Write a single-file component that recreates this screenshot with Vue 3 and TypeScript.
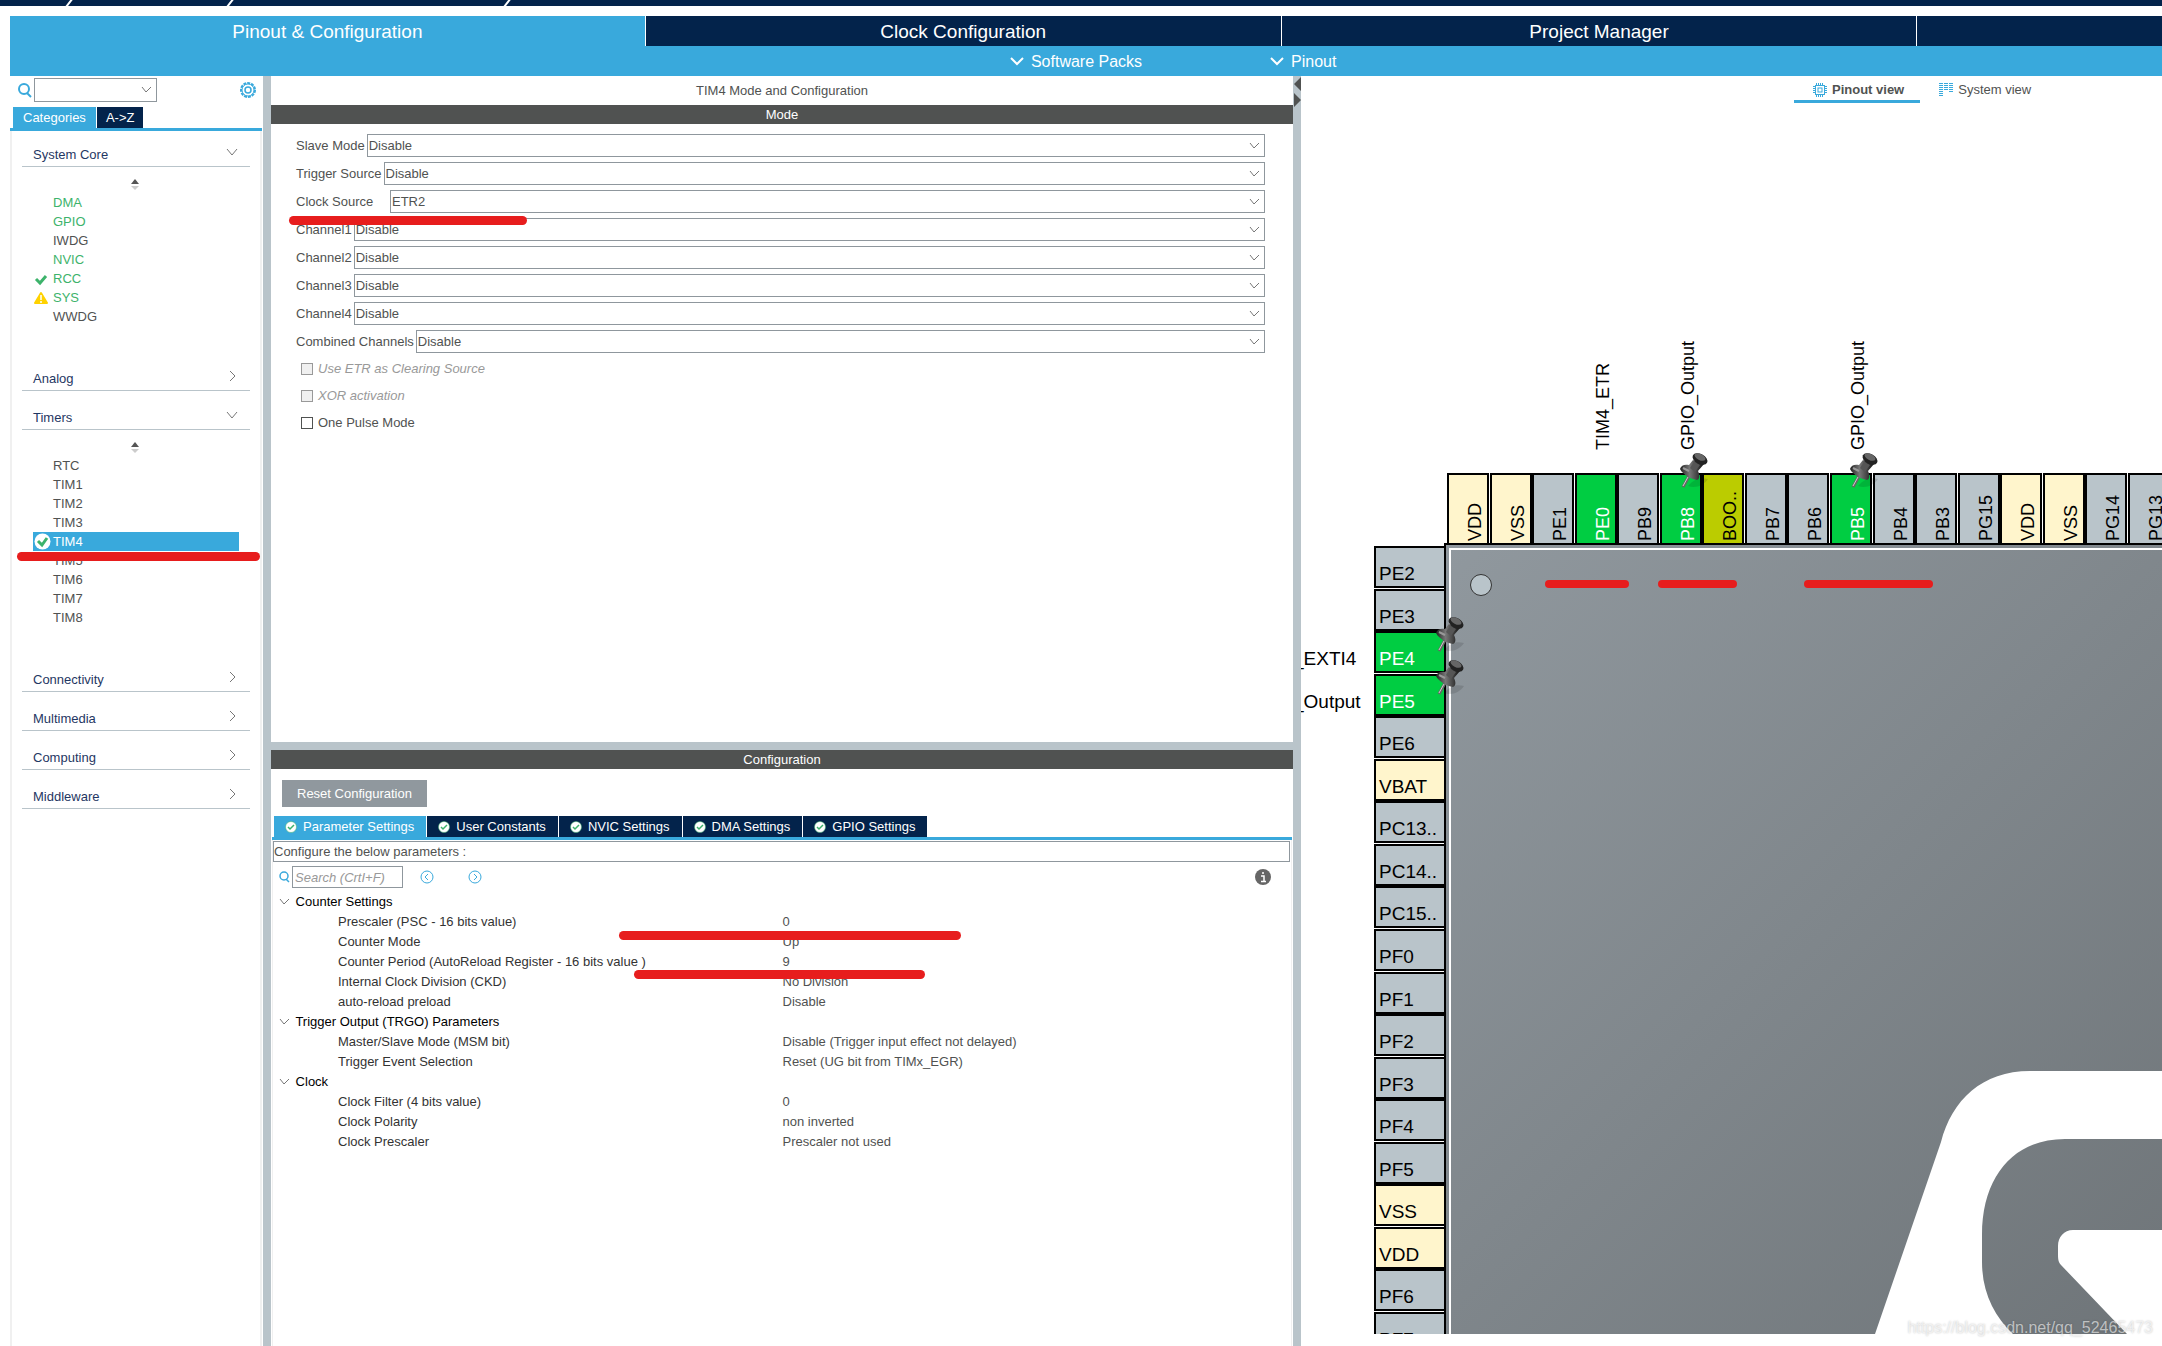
<script setup lang="ts">
import { ref } from 'vue'

interface Item {
  name: string
  state?: 'used' | 'ready' | 'warn' | 'active'
}
interface Category {
  name: string
  items?: Item[]
}
interface ModeField {
  id: string
  label: string
  value: string
  wide?: boolean
}
interface ParamGroup {
  name: string
  rows: [string, string][]
}
interface Pin {
  name: string
  kind: 'io' | 'power' | 'on' | 'boot'
  label?: string
  pinned?: boolean
}

const mainTabs = ['Pinout & Configuration', 'Clock Configuration', 'Project Manager', '']

const categories: Category[] = [
  {
    name: 'System Core',
    items: [
      { name: 'DMA', state: 'used' },
      { name: 'GPIO', state: 'used' },
      { name: 'IWDG' },
      { name: 'NVIC', state: 'used' },
      { name: 'RCC', state: 'ready' },
      { name: 'SYS', state: 'warn' },
      { name: 'WWDG' },
    ],
  },
  { name: 'Analog' },
  {
    name: 'Timers',
    items: [
      { name: 'RTC' },
      { name: 'TIM1' },
      { name: 'TIM2' },
      { name: 'TIM3' },
      { name: 'TIM4', state: 'active' },
      { name: 'TIM5' },
      { name: 'TIM6' },
      { name: 'TIM7' },
      { name: 'TIM8' },
    ],
  },
  { name: 'Connectivity' },
  { name: 'Multimedia' },
  { name: 'Computing' },
  { name: 'Middleware' },
]

const fields = ref<ModeField[]>([
  { id: 'slave', label: 'Slave Mode', value: 'Disable' },
  { id: 'trigger', label: 'Trigger Source', value: 'Disable' },
  { id: 'clock', label: 'Clock Source', value: 'ETR2', wide: true },
  { id: 'ch1', label: 'Channel1', value: 'Disable' },
  { id: 'ch2', label: 'Channel2', value: 'Disable' },
  { id: 'ch3', label: 'Channel3', value: 'Disable' },
  { id: 'ch4', label: 'Channel4', value: 'Disable' },
  { id: 'combined', label: 'Combined Channels', value: 'Disable' },
])

const checks = [
  { id: 'etr', label: 'Use ETR as Clearing Source', disabled: true },
  { id: 'xor', label: 'XOR activation', disabled: true },
  { id: 'pulse', label: 'One Pulse Mode', disabled: false },
]

const configTabs = ['Parameter Settings', 'User Constants', 'NVIC Settings', 'DMA Settings', 'GPIO Settings']

const groups: ParamGroup[] = [
  {
    name: 'Counter Settings',
    rows: [
      ['Prescaler (PSC - 16 bits value)', '0'],
      ['Counter Mode', 'Up'],
      ['Counter Period (AutoReload Register - 16 bits value )', '9'],
      ['Internal Clock Division (CKD)', 'No Division'],
      ['auto-reload preload', 'Disable'],
    ],
  },
  {
    name: 'Trigger Output (TRGO) Parameters',
    rows: [
      ['Master/Slave Mode (MSM bit)', 'Disable (Trigger input effect not delayed)'],
      ['Trigger Event Selection', 'Reset (UG bit from TIMx_EGR)'],
    ],
  },
  {
    name: 'Clock',
    rows: [
      ['Clock Filter (4 bits value)', '0'],
      ['Clock Polarity', 'non inverted'],
      ['Clock Prescaler', 'Prescaler not used'],
    ],
  },
]

const topPins: Pin[] = [
  { name: 'VDD', kind: 'power' },
  { name: 'VSS', kind: 'power' },
  { name: 'PE1', kind: 'io' },
  { name: 'PE0', kind: 'on', label: 'TIM4_ETR' },
  { name: 'PB9', kind: 'io' },
  { name: 'PB8', kind: 'on', label: 'GPIO_Output', pinned: true },
  { name: 'BOO..', kind: 'boot' },
  { name: 'PB7', kind: 'io' },
  { name: 'PB6', kind: 'io' },
  { name: 'PB5', kind: 'on', label: 'GPIO_Output', pinned: true },
  { name: 'PB4', kind: 'io' },
  { name: 'PB3', kind: 'io' },
  { name: 'PG15', kind: 'io' },
  { name: 'VDD', kind: 'power' },
  { name: 'VSS', kind: 'power' },
  { name: 'PG14', kind: 'io' },
  { name: 'PG13', kind: 'io' },
]

const leftPins: Pin[] = [
  { name: 'PE2', kind: 'io' },
  { name: 'PE3', kind: 'io' },
  { name: 'PE4', kind: 'on', label: '_EXTI4', pinned: true },
  { name: 'PE5', kind: 'on', label: '_Output', pinned: true },
  { name: 'PE6', kind: 'io' },
  { name: 'VBAT', kind: 'power' },
  { name: 'PC13..', kind: 'io' },
  { name: 'PC14..', kind: 'io' },
  { name: 'PC15..', kind: 'io' },
  { name: 'PF0', kind: 'io' },
  { name: 'PF1', kind: 'io' },
  { name: 'PF2', kind: 'io' },
  { name: 'PF3', kind: 'io' },
  { name: 'PF4', kind: 'io' },
  { name: 'PF5', kind: 'io' },
  { name: 'VSS', kind: 'power' },
  { name: 'VDD', kind: 'power' },
  { name: 'PF6', kind: 'io' },
  { name: 'PF7', kind: 'io' },
]

const fills: Record<Pin['kind'], string> = {
  io: '#b9c4ca',
  power: '#fff5cc',
  on: '#00cd42',
  boot: '#bbcc00',
}

/* Pins are spread evenly along each edge of the package and snapped to whole pixels. */
const pinPos = (i: number): number => 3 + Math.round((i * 851) / 20)
</script>

<template>
  <div class="app">
    <div class="crumbs">
      <svg width="600" height="6" aria-hidden="true">
        <path d="M66 7L73 -2M227 7L234 -2M504 7L511 -2" stroke="#fff" stroke-width="2" />
      </svg>
    </div>

    <nav class="main-tabs">
      <button v-for="(t, i) in mainTabs" :key="i" type="button" :class="['main-tab', { on: i === 0 }]">{{ t }}</button>
    </nav>
    <div class="subbar">
      <button type="button" class="sub-btn">
        <svg width="14" height="10" viewBox="0 0 14 10"><path d="M1 2l6 6 6-6" fill="none" stroke="#fff" stroke-width="2" /></svg>
        Software Packs
      </button>
      <button type="button" class="sub-btn">
        <svg width="14" height="10" viewBox="0 0 14 10"><path d="M1 2l6 6 6-6" fill="none" stroke="#fff" stroke-width="2" /></svg>
        Pinout
      </button>
    </div>

    <div class="body">
      <aside class="side">
        <div class="side-tools">
          <svg width="16" height="16" viewBox="0 0 16 16" fill="none" stroke="#39a9dc" stroke-width="2">
            <circle cx="7" cy="7" r="5" /><path d="M10 11l4 4" />
          </svg>
          <span class="pick side-pick">
            <select aria-label="Search peripheral"><option></option></select>
            <svg width="11" height="7" viewBox="0 0 11 7"><path d="M1 1l4 5 5-5" fill="none" stroke="#777" /></svg>
          </span>
          <button type="button" class="gear" aria-label="Settings">
            <svg width="18" height="18" viewBox="0 0 18 18" fill="none" stroke="#39a9dc">
              <circle cx="9" cy="9" r="7" stroke-width="2" stroke-dasharray="3 1" />
              <circle cx="9" cy="9" r="6" /><circle cx="9" cy="9" r="3" stroke-width="1.5" />
            </svg>
          </button>
        </div>
        <div class="side-tabs">
          <button type="button" class="on">Categories</button>
          <button type="button">A-&gt;Z</button>
        </div>
        <div class="side-panel">
          <section v-for="c in categories" :key="c.name" class="cat">
            <button type="button" class="cat-head">
              <span>{{ c.name }}</span>
              <svg v-if="c.items" width="12" height="12" viewBox="0 0 12 12"><path d="M1 3l5 6 5-6" fill="none" stroke="#777" /></svg>
              <svg v-else width="12" height="12" viewBox="0 0 12 12"><path d="M4 1l5 5-5 5" fill="none" stroke="#777" /></svg>
            </button>
            <div v-if="c.items" class="cat-body">
              <svg class="spin" width="8" height="12" viewBox="0 0 8 12">
                <path d="M0 5L4 0l4 5z" fill="#555" /><path d="M0 7h8l-4 4z" fill="#ccc" />
              </svg>
              <ul>
                <li v-for="it in c.items" :key="it.name" :class="it.state">
                  <span class="mark">
                    <svg v-if="it.state === 'ready'" width="14" height="14" viewBox="0 0 14 14"><path d="M2 7l4 4 6-7" fill="none" stroke="#3db36b" stroke-width="3" /></svg>
                    <svg v-else-if="it.state === 'warn'" width="14" height="14" viewBox="0 0 14 14">
                      <path d="M7 2L13 12H1z" fill="#ffd200" stroke="#ffd200" stroke-width="2" stroke-linejoin="round" />
                      <path d="M7 4v5M7 10v2" stroke="#fff" stroke-width="1.5" />
                    </svg>
                    <svg v-else-if="it.state === 'active'" width="17" height="17" viewBox="0 0 17 17">
                      <circle cx="8.5" cy="8.5" r="8" fill="#fff" /><path d="M4 8l4 4 5-7" fill="none" stroke="#3db36b" stroke-width="3" />
                    </svg>
                  </span>
                  {{ it.name }}
                </li>
              </ul>
            </div>
          </section>
          <i class="stroke s-side"></i>
        </div>
      </aside>

      <main class="mid">
        <div class="mid-title">TIM4 Mode and Configuration</div>
        <h2 class="bar">Mode</h2>
        <div class="mode">
          <div v-for="f in fields" :key="f.id" class="field">
            <label :for="f.id" :class="{ wide: f.wide }">{{ f.label }}</label>
            <span class="pick">
              <select :id="f.id" v-model="f.value"><option>{{ f.value }}</option></select>
              <svg width="11" height="7" viewBox="0 0 11 7"><path d="M1 1l4 5 5-5" fill="none" stroke="#777" /></svg>
            </span>
          </div>
          <div v-for="k in checks" :key="k.id" class="check">
            <input :id="k.id" type="checkbox" :disabled="k.disabled" />
            <label :for="k.id">{{ k.label }}</label>
          </div>
          <i class="stroke s-clock"></i>
        </div>
        <h2 class="bar conf-bar">Configuration</h2>
        <div class="conf">
          <button type="button" class="reset">Reset Configuration</button>
          <div class="conf-tabs">
            <button v-for="(t, i) in configTabs" :key="t" type="button" :class="{ on: i === 0 }">
              <svg width="12" height="12" viewBox="0 0 12 12">
                <circle cx="6" cy="6" r="5.5" fill="#fff" stroke="#3db36b" stroke-width="0.5" /><path d="M3 6l2 2 4-4" fill="none" stroke="#3db36b" stroke-width="1.5" />
              </svg>
              {{ t }}
            </button>
          </div>
          <div class="params">
            <div class="hint">Configure the below parameters :</div>
            <div class="find">
              <svg width="11" height="12" viewBox="0 0 11 12" fill="none" stroke="#39a9dc" stroke-width="1.5">
                <circle cx="5" cy="5" r="4" /><path d="M7 8l3 3" />
              </svg>
              <input type="text" placeholder="Search (CrtI+F)" aria-label="Search parameters" />
              <button type="button" class="prev" aria-label="Previous">
                <svg width="14" height="14" viewBox="0 0 14 14" fill="none" stroke="#39a9dc"><circle cx="7" cy="7" r="6" /><path d="M8 4L5 7l3 3" /></svg>
              </button>
              <button type="button" class="next" aria-label="Next">
                <svg width="14" height="14" viewBox="0 0 14 14" fill="none" stroke="#39a9dc"><circle cx="7" cy="7" r="6" /><path d="M6 4l3 3-3 3" /></svg>
              </button>
              <svg class="info" width="16" height="16" viewBox="0 0 16 16">
                <circle cx="8" cy="8" r="8" fill="#666" />
                <path d="M6 7h3v5M6 12.5h5M7 4h2" fill="none" stroke="#fff" stroke-width="1.5" />
              </svg>
            </div>
            <table>
              <tbody v-for="g in groups" :key="g.name">
                <tr>
                  <th colspan="2">
                    <svg width="11" height="7" viewBox="0 0 11 7"><path d="M1 1l4 5 5-5" fill="none" stroke="#777" /></svg>
                    {{ g.name }}
                  </th>
                </tr>
                <tr v-for="r in g.rows" :key="r[0]">
                  <td>{{ r[0] }}</td>
                  <td>{{ r[1] }}</td>
                </tr>
              </tbody>
            </table>
            <i class="stroke s-psc"></i>
            <i class="stroke s-arr"></i>
          </div>
        </div>
      </main>

      <div class="split">
        <svg width="8" height="32" viewBox="0 0 8 32" fill="#505251"><path d="M8 1v14L1 8zM1 17v14l7-7z" /></svg>
      </div>

      <section class="view">
        <div class="view-tabs">
          <button type="button" class="on">
            <svg width="14" height="14" viewBox="0 0 14 14" fill="none" stroke="#39a9dc">
              <rect x="2.5" y="2.5" width="9" height="9" /><rect x="5" y="5" width="4" height="4" />
              <path d="M3.5 0v2M5.5 0v2M7.5 0v2M9.5 0v2M3.5 12v2M5.5 12v2M7.5 12v2M9.5 12v2M0 3.5h2M0 5.5h2M0 7.5h2M0 9.5h2M12 3.5h2M12 5.5h2M12 7.5h2M12 9.5h2" />
            </svg>
            Pinout view
          </button>
          <button type="button">
            <svg width="14" height="14" viewBox="0 0 14 14" fill="none" stroke="#39a9dc" stroke-width="4">
              <path d="M2 0v14" stroke-dasharray="1 1" /><path d="M7 0v8" stroke-dasharray="1 1" /><path d="M12 0v10" stroke-dasharray="1 1" />
            </svg>
            System view
          </button>
        </div>
        <svg class="chip" aria-label="MCU pinout">
          <defs>
            <linearGradient id="pkg" gradientUnits="userSpaceOnUse" x1="0" y1="0" x2="750" y2="750">
              <stop offset="0" stop-color="#90989e" /><stop offset="1" stop-color="#6f7579" />
            </linearGradient>
            <linearGradient id="metal" x1="0" y1="0" x2="1" y2="0">
              <stop offset="0" stop-color="#222" /><stop offset="0.4" stop-color="#777" /><stop offset="1" stop-color="#111" />
            </linearGradient>
            <g id="pushpin">
              <path d="M8 34C14 27 20 25 28 27C24 33 16 37 8 34z" fill="#000" opacity="0.12" />
              <path d="M3 35L9 24" stroke="#666" stroke-width="3" />
              <path d="M3 34L8 25" stroke="#ccc" stroke-width="1" />
              <path d="M0 17C1 13 5 12 9 13L13 8L24 12L18 19C20 23 20 27 17 28C11 27 3 23 0 17z" fill="url(#metal)" />
              <path d="M14 10L20 13L15 20L10 16z" fill="#555" />
              <ellipse cx="20" cy="7" rx="8" ry="5" transform="rotate(28 20 7)" fill="#222" />
              <ellipse cx="20" cy="5" rx="6" ry="3" transform="rotate(28 20 5)" fill="#666" />
              <path d="M3 16L9 19" stroke="#999" stroke-width="2" />
            </g>
          </defs>
          <g transform="translate(143 439)">
            <g v-for="(p, i) in topPins" :key="'t' + i">
              <rect :x="pinPos(i) + 1" y="-69" width="40" height="72" :fill="fills[p.kind]" stroke="#000" stroke-width="2" />
              <text class="vert" :fill="p.kind === 'on' ? '#fff' : '#000'" :transform="`translate(${pinPos(i) + 34} -2) rotate(-90)`">{{ p.name }}</text>
              <text v-if="p.label" class="vert" :transform="`translate(${pinPos(i) + 34} -93) rotate(-90)`">{{ p.label }}</text>
            </g>
            <g v-for="(p, i) in leftPins" :key="'l' + i">
              <rect x="-69" :y="pinPos(i) + 1" width="72" height="40" :fill="fills[p.kind]" stroke="#000" stroke-width="2" />
              <text class="horz" x="-65" :y="pinPos(i) + 34" :fill="p.kind === 'on' ? '#fff' : '#000'">{{ p.name }}</text>
              <text v-if="p.label" class="horz" x="-151" :y="pinPos(i) + 34">{{ p.label }}</text>
            </g>
            <rect width="1600" height="1600" fill="#000" />
            <rect x="2" y="2" width="1600" height="1600" fill="url(#pkg)" />
            <path d="M6 1600V6H1600" fill="none" stroke="#fff" stroke-width="2" />
            <circle cx="37" cy="42" r="10.5" fill="#b9c4ca" stroke="#333" />
            <path d="M431 791L497 599C508 557 538 528 586 528H1600V1600H155z" fill="#fff" />
            <path d="M1600 596H621C571 596 538 632 538 692V719C538 749 550 773 569 791L640 860H749L617 722C614 719 614 715 614 710V703C614 694 620 687 629 687H1600z" fill="url(#pkg)" />
            <g fill="#e71d1d">
              <rect x="101" y="37" width="84" height="8" rx="4" />
              <rect x="214" y="37" width="79" height="8" rx="4" />
              <rect x="360" y="37" width="129" height="8" rx="4" />
            </g>
            <template v-for="(p, i) in topPins" :key="'tp' + i">
              <use v-if="p.pinned" href="#pushpin" :x="pinPos(i) + 20" y="-91" />
            </template>
            <template v-for="(p, i) in leftPins" :key="'lp' + i">
              <use v-if="p.pinned" href="#pushpin" x="-8" :y="pinPos(i) - 15" />
            </template>
          </g>
        </svg>
      </section>
    </div>
    <a class="mark-url" href="https://blog.csdn.net/qq_52465473">https://blog.csdn.net/qq_52465473</a>
  </div>
</template>

<style>
body {
  margin: 0;
  overflow: hidden;
}
</style>

<style scoped>
.app {
  --blue: #39a9dc;
  --navy: #03234b;
  --grey: #b9c4ca;
  --line: #8f979d;
  position: relative;
  display: flex;
  flex-direction: column;
  min-height: 100vh;
  overflow: hidden;
  background: #fff;
  color: #505251;
  font: 13px/19px 'Liberation Sans', Arial, sans-serif;
}
.app *,
.app {
  box-sizing: border-box;
}
button,
select,
input {
  margin: 0;
  padding: 0;
  border: 0;
  border-radius: 0;
  background: none;
  color: inherit;
  font: inherit;
}
svg {
  flex: none;
  display: block;
}
.crumbs {
  height: 6px;
  margin-bottom: 10px;
  background: var(--navy);
}
.main-tabs {
  display: flex;
  gap: 1px;
  margin-left: 10px;
}
.main-tab {
  flex: 0 0 29.5%;
  height: 30px;
  background: var(--navy);
  color: #fff;
  font-size: 19px;
}
.main-tab.on {
  background: var(--blue);
}
.subbar {
  display: flex;
  gap: 128px;
  height: 30px;
  margin-left: 10px;
  padding-left: 46.25%;
  background: var(--blue);
}
.sub-btn {
  display: flex;
  align-items: center;
  gap: 7px;
  color: #fff;
  font-size: 16px;
  white-space: nowrap;
}
.body {
  flex: 1;
  display: grid;
  grid-template-columns: 271px minmax(0, 1022fr) 8px minmax(0, 861fr);
}

.side {
  display: flex;
  flex-direction: column;
  border-right: 8px solid var(--grey);
  padding: 0 1px 0 10px;
}
.side-tools {
  display: flex;
  align-items: center;
  height: 27px;
  padding: 0 5px 0 7px;
  gap: 1px;
}
.pick {
  position: relative;
  flex: 1;
  display: flex;
  height: 23px;
}
.side-pick {
  flex: 0 0 123px;
  height: 24px;
}
.pick select {
  width: 100%;
  padding: 0 1px;
  border: 1px solid var(--line);
  background: #fff;
  appearance: none;
}
.pick svg {
  position: absolute;
  right: 5px;
  top: 8px;
  pointer-events: none;
}
.gear {
  margin-left: auto;
}
.side-tabs {
  display: flex;
  gap: 1px;
  margin-top: 4px;
  padding-left: 3px;
  border-bottom: 3px solid var(--blue);
}
.side-tabs button {
  height: 21px;
  padding: 0 9px;
  background: var(--navy);
  color: #fff;
}
.side-tabs .on {
  padding: 0 10px;
  background: var(--blue);
}
.side-panel {
  position: relative;
  flex: 1;
  padding: 0 10px;
  border: solid #f0f0f0;
  border-width: 0 2px;
}
.cat-head {
  display: flex;
  align-items: flex-end;
  justify-content: space-between;
  width: 100%;
  height: 39px;
  padding: 0 12px 2px 11px;
  border-bottom: 1px solid var(--grey);
  color: #1f3763;
}
.cat-head svg {
  margin-bottom: 6px;
}
.cat:first-child .cat-head {
  height: 36px;
}
.cat-body {
  padding: 12px 0 26px;
}
.spin {
  margin: 0 auto 2px 109px;
}
ul {
  margin: 0;
  padding: 0 11px;
  list-style: none;
}
li {
  display: flex;
  align-items: center;
  height: 19px;
}
.mark {
  width: 20px;
  padding-left: 1px;
}
.used,
.ready,
.warn {
  color: #3db36b;
}
.active {
  background: var(--blue);
  color: #fff;
}

.mid {
  display: flex;
  flex-direction: column;
}
.mid-title {
  height: 29px;
  line-height: 29px;
  text-align: center;
}
.bar {
  margin: 0;
  background: #505251;
  color: #fff;
  font: inherit;
  text-align: center;
}
.conf-bar {
  border-top: 8px solid var(--grey);
}
.mode {
  position: relative;
  height: 618px;
  padding: 10px 28px 0 25px;
}
.field {
  display: flex;
  align-items: center;
  gap: 2px;
  margin-bottom: 5px;
}
.field .wide {
  width: 92px;
}
.check {
  display: flex;
  align-items: center;
  gap: 5px;
  height: 27px;
  padding-left: 5px;
}
.field + .check {
  margin-top: -3px;
}
.check:has(:disabled) {
  color: #999;
  font-style: italic;
}
.check input {
  appearance: none;
  width: 12px;
  height: 12px;
  border: 1px solid #505251;
  background: #fff;
}
.check input:disabled {
  border-color: #999;
  background: #f0f0f0;
}
.conf {
  flex: 1;
  display: flex;
  flex-direction: column;
  padding: 11px 1px 0;
}
.reset {
  align-self: flex-start;
  height: 27px;
  margin: 0 0 9px 10px;
  padding: 0 15px;
  background: #90989e;
  color: #fff;
}
.conf-tabs {
  display: flex;
  gap: 1px;
  padding-left: 2px;
  border-bottom: 3px solid var(--blue);
}
.conf-tabs button {
  display: flex;
  align-items: center;
  gap: 6px;
  height: 21px;
  padding: 0 12px 0 11px;
  background: var(--navy);
  color: #fff;
}
.conf-tabs .on {
  background: var(--blue);
}
.params {
  position: relative;
  flex: 1;
  padding: 1px 1px 0 0;
  border: solid #f0f0f0;
  border-width: 0 1px;
}
.hint {
  height: 21px;
  border: 1px solid var(--line);
}
.find {
  display: flex;
  align-items: center;
  margin-top: 4px;
  padding: 0 19px 0 6px;
}
.find input {
  width: 111px;
  height: 22px;
  margin-left: 2px;
  padding: 0 2px;
  border: 1px solid var(--line);
}
.find input::placeholder {
  color: #999;
  font-style: italic;
  opacity: 1;
}
.prev {
  margin-left: 17px;
}
.next {
  margin-left: 34px;
}
.info {
  margin-left: auto;
}
table {
  width: 100%;
  margin-top: 3px;
  border-collapse: collapse;
  table-layout: fixed;
}
tr {
  height: 20px;
}
th,
td {
  padding: 0;
  text-align: left;
  font-weight: 400;
}
th {
  padding-left: 6px;
  color: #000;
}
th svg {
  display: inline-block;
  vertical-align: 1px;
  margin-right: 2px;
}
td {
  width: 50%;
  padding-left: 65px;
  color: #333;
}
td + td {
  padding-left: 1px;
  color: #505251;
}

.split {
  background: var(--grey);
}

.view {
  display: flex;
  flex-direction: column;
  padding-bottom: 12px;
}
.view-tabs {
  display: flex;
  height: 28px;
  padding-left: 493px;
}
.view-tabs button {
  display: flex;
  align-items: center;
  gap: 5px;
  height: 27px;
  padding: 3px 16px 0 19px;
  border-bottom: 3px solid transparent;
  white-space: nowrap;
}
.view-tabs .on {
  border-color: var(--blue);
  font-weight: 700;
}
.chip {
  flex: 1 1 0;
  width: 100%;
  min-height: 0;
  overflow: hidden;
}
.vert {
  font-size: 18px;
}
.horz {
  font-size: 19px;
}

.stroke {
  position: absolute;
  height: 9px;
  border-radius: 5px;
  background: #e71d1d;
}
.s-side {
  left: 5px;
  right: 0;
  top: 421px;
}
.s-clock {
  left: 18px;
  top: 92px;
  width: 238px;
}
.s-psc {
  left: 34%;
  top: 91px;
  width: 342px;
}
.s-arr {
  left: 35.5%;
  top: 130px;
  width: 291px;
}
.mark-url {
  position: absolute;
  right: 9px;
  bottom: 9px;
  color: rgba(255, 255, 255, 0.6);
  font-size: 16px;
  text-decoration: none;
  text-shadow: 0 0 2px rgba(0, 0, 0, 0.25);
}
</style>
